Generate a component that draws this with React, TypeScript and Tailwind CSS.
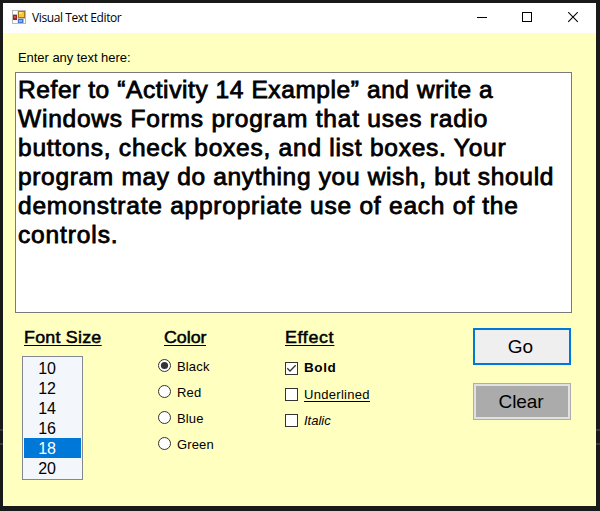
import React from "react";

const lines: { text: string; spacing: string }[] = [
  { text: "Refer to “Activity 14 Example” and write a", spacing: "tracking-[0.55px]" },
  { text: "Windows Forms program that uses radio", spacing: "tracking-[0.74px]" },
  { text: "buttons, check boxes, and list boxes. Your", spacing: "tracking-[0.72px]" },
  { text: "program may do anything you wish, but should", spacing: "tracking-[0.63px]" },
  { text: "demonstrate appropriate use of each of the", spacing: "tracking-[0.72px]" },
  { text: "controls.", spacing: "tracking-[0.82px]" },
];

const sizes = [10, 12, 14, 16, 18, 20];

function AppIcon() {
  return (
    <svg width="14" height="14" viewBox="0 0 14 14" shapeRendering="crispEdges">
      <rect width="14" height="14" fill="#b9b9b9" />
      <rect x="1" y="1" width="4" height="3" fill="#fff" />
      <rect x="1" y="10" width="4" height="3" fill="#fff" />
      <rect x="5" y="1" width="1" height="12" fill="#e4e4e4" />
      <rect x="12" y="9" width="1" height="4" fill="#fff" />
      <rect x="1" y="5" width="4" height="5" fill="#a3201c" />
      <rect x="2" y="6" width="2" height="2" fill="#c8564c" />
      <rect x="6" y="1" width="7" height="7" fill="#a87a10" />
      <rect x="7" y="2" width="5" height="5" fill="#f8c63a" />
      <rect x="7" y="2" width="3" height="2" fill="#ffe48b" />
      <rect x="6" y="9" width="5" height="4" fill="#3f74d0" />
      <rect x="7" y="10" width="3" height="2" fill="#86b1f4" />
    </svg>
  );
}

function Heading({ children, className }: { children: React.ReactNode; className: string }) {
  return (
    <div className={`h-[20px] w-fit origin-left scale-x-105 whitespace-nowrap text-[17px] leading-[20px] [-webkit-text-stroke:0.5px_#000] ${className}`}>
      <span className="block h-[18px] border-b border-black">{children}</span>
    </div>
  );
}

function Radio({ label, checked }: { label: string; checked?: boolean }) {
  return (
    <label className="flex h-[26px] items-center text-[13px]">
      <svg className="mt-[-1px]" width="13" height="13" viewBox="0 0 13 13">
        <circle cx="6.5" cy="6.5" r="6" fill="#fff" stroke="#333" />
        {checked && <circle cx="6.5" cy="6.5" r="3.6" fill="#333" />}
      </svg>
      <span className="ml-[6px] leading-[15px] tracking-[0.15px]">{label}</span>
    </label>
  );
}

function Check({ checked, children }: { checked?: boolean; children: React.ReactNode }) {
  return (
    <label className="flex h-[26px] items-center text-[13px]">
      <svg className="mt-px" width="13" height="13" viewBox="0 0 13 13">
        <rect x="0.5" y="0.5" width="12" height="12" fill="#fff" stroke="#333" />
        {checked && <path d="M2.3 6.3 5 9 10.7 3.3" fill="none" stroke="#333" strokeWidth="1.3" />}
      </svg>
      {children}
    </label>
  );
}

export default function App() {
  return (
    <div className="h-[511px] w-[600px] overflow-hidden bg-[#1a1a1a] bg-[linear-gradient(to_bottom,transparent_429px,#393939_429px,#393939_431px,transparent_431px,transparent_443px,#393939_443px,#393939_445px,transparent_445px)] pl-[3px] pt-[3px] font-['Liberation_Sans',Arial,sans-serif] text-black">
      <div className="flex h-[503px] w-[593px] flex-col bg-[#ffffc0]">
        <header className="flex h-[30px] shrink-0 items-start bg-white pl-[9px]">
          <div className="mt-[7px]">
            <AppIcon />
          </div>
          <span className="ml-[6px] mt-[7px] flex-1 font-['Open_Sans','Noto_Sans',sans-serif] text-[12px] leading-[16px] tracking-[-0.4px]">
            Visual Text Editor
          </span>
          <svg className="mr-[16px] mt-[9px]" width="103" height="11" viewBox="0 0 103 11" fill="none" stroke="#000">
            <path d="M0 5.5H10" />
            <rect x="45.5" y="0.5" width="9" height="9" />
            <path d="M91.2 0.2 100.8 9.8M100.8 0.2 91.2 9.8" strokeWidth="1.1" />
          </svg>
        </header>
        <main className="flex flex-col pl-[12px] pt-[17px]">
          <div className="h-[22px] pl-[3px] text-[13px] leading-[16px] tracking-[-0.05px]">
            <span>Enter any text here:</span>
          </div>
          <div className="h-[241px] w-[557px] border border-[#7a7a7a] bg-white pl-[2px] pt-[3px] text-[23px] leading-[29px] [-webkit-text-stroke:0.8px_#000]">
            {lines.map((l) => (
              <div key={l.text} className="h-[29px] w-fit origin-left scale-x-[1.065] whitespace-nowrap">
                <span className={l.spacing}>{l.text}</span>
              </div>
            ))}
          </div>
          <div className="flex pt-[15px]">
            <section className="w-[135px] pl-[7px]">
              <Heading className="ml-[2px] tracking-[0.22px]">Font Size</Heading>
              <ul className="mt-[8px] h-[124px] w-[61px] border border-[#828790] bg-[#f3f7fc] p-px text-[16px] leading-[22px]">
                {sizes.map((n) => (
                  <li key={n} className={`h-[20px] pr-[25px] text-right ${n === 18 ? "bg-[#0078d7] text-white" : ""}`}>
                    {n}
                  </li>
                ))}
              </ul>
            </section>
            <section className="w-[135px] pl-[8px]">
              <Heading className="ml-[6px] tracking-[-0.05px]">Color</Heading>
              <div className="mt-[5px]">
                <Radio label="Black" checked />
                <Radio label="Red" />
                <Radio label="Blue" />
                <Radio label="Green" />
              </div>
            </section>
            <section className="w-[188px]">
              <Heading className="tracking-[0.6px]">Effect</Heading>
              <div className="mt-[7px]">
                <Check checked>
                  <b className="ml-[6px] mt-px text-[13.5px] tracking-[0.6px]">Bold</b>
                </Check>
                <Check>
                  <span className="ml-[6px] h-[15px] border-b border-black leading-[15px] tracking-[0.3px]">Underlined</span>
                </Check>
                <Check>
                  <i className="ml-[6px] mt-px">Italic</i>
                </Check>
              </div>
            </section>
            <section className="flex flex-col gap-[18px] text-[19px]">
              <button className="flex h-[37px] w-[98px] items-center justify-center border-2 border-[#0078d7] bg-[#efefef] pr-[3px] pt-[2px]">
                Go
              </button>
              <button className="h-[37px] w-[98px] border border-[#adadad]">
                <span className="flex h-full items-center justify-center border-2 border-[#e1e1e1] bg-[#ababab] pr-[2px] pt-[2px] tracking-[-0.1px]">
                  Clear
                </span>
              </button>
            </section>
          </div>
        </main>
      </div>
    </div>
  );
}
